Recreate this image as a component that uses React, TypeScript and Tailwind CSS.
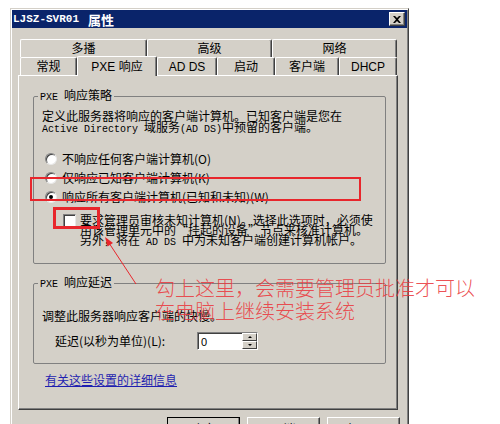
const mono = "font-['Liberation_Mono','Noto_Sans_CJK_SC',monospace] text-[10px]";

function Tab({ w, label, selected }: { w: string; label: string; selected?: boolean }) {
  return (
    <div
      className={`${w} ${
        selected ? "relative z-10 h-[20px] -mb-[1px] bg-[#d4d0c8]" : "h-full"
      } flex items-center justify-center border-t border-l border-white border-r border-r-[#404040] shadow-[inset_-1px_0_0_#808080] rounded-t-[2px] font-['Liberation_Sans','Noto_Sans_CJK_SC',sans-serif] text-[12px] leading-none`}
    >
      {label}
    </div>
  );
}

function Radio({ label, checked }: { label: string; checked?: boolean }) {
  return (
    <div className="h-[19px] flex items-center whitespace-nowrap">
      <div className="ml-[3px] w-[12px] h-[12px] rounded-full bg-white border border-t-[#808080] border-l-[#808080] border-r-[#e8e8e8] border-b-[#e8e8e8] shadow-[inset_1px_1px_0_#404040] flex items-center justify-center">
        {checked && <div className="w-[4px] h-[4px] rounded-full bg-black" />}
      </div>
      <span className="ml-[5px] leading-[14px]">{label}</span>
    </div>
  );
}

function Button({ label, def }: { label: string; def?: boolean }) {
  return (
    <div
      className={`w-[73px] h-[23px] flex items-center justify-center bg-[#d4d0c8] border ${
        def ? "border-black" : "border-t-white border-l-white border-r-[#404040] border-b-[#404040]"
      } shadow-[inset_-1px_-1px_0_#808080]`}
    >
      {label}
    </div>
  );
}

export default function App() {
  return (
    <div className="relative w-[500px] h-[424px] overflow-hidden bg-white pt-[8px] pl-[10px] font-['Noto_Sans_CJK_SC',sans-serif] text-[12px] text-black">
      <div className="w-[399px] h-[440px] bg-[#d4d0c8] border border-t-[#d4d0c8] border-l-[#d4d0c8] border-r-[#404040] border-b-[#404040] p-[1px] shadow-[inset_1px_1px_0_#fff,inset_-1px_-1px_0_#808080]">
        {/* title bar */}
        <div className="h-[18px] bg-[#0a246a] flex items-center justify-between pl-[1px] pr-[2px]">
          <div className="flex items-center text-white font-bold">
            <span className="font-['Liberation_Mono',monospace] text-[11px] leading-none">LJSZ-SVR01</span>
            <span className="ml-[9px] text-[13px] leading-none">属性</span>
          </div>
          <div className="w-[16px] h-[14px] bg-[#d4d0c8] border border-t-white border-l-white border-r-[#404040] border-b-[#404040] shadow-[inset_-1px_-1px_0_#808080] flex items-center justify-center">
            <svg width="8" height="7" viewBox="0 0 8 7">
              <path d="M0 0h2l2 2 2-2h2L5 3.5 8 7H6L4 5 2 7H0l3-3.5z" fill="#000" />
            </svg>
          </div>
        </div>

        <div className="ml-[6px] mt-[11px] w-[380px]">
          {/* tabs */}
          <div className="flex h-[18px] pl-[2px]">
            <Tab w="w-[127px]" label="多播" />
            <Tab w="w-[125px]" label="高级" />
            <Tab w="w-[125px]" label="网络" />
          </div>
          <div className="flex items-end h-[18px] pl-[2px]">
            <Tab w="w-[57px]" label="常规" />
            <Tab w="w-[80px]" label="PXE 响应" selected />
            <Tab w="w-[60px]" label="AD DS" />
            <Tab w="w-[58px]" label="启动" />
            <Tab w="w-[64px]" label="客户端" />
            <Tab w="w-[58px]" label="DHCP" />
          </div>

          {/* panel */}
          <div className="h-[335px] border border-t-white border-l-white border-r-[#404040] border-b-[#404040] shadow-[inset_-1px_-1px_0_#808080] pt-[12px] pl-[14px] pr-[11px]">
            <fieldset className="h-[176px] border border-[#808080] rounded-[2px] px-[8px]">
              <legend className="-ml-[4px] px-[2px] leading-[14px] whitespace-nowrap">
                <span className={mono}>PXE </span>响应策略
              </legend>
              <div className="pt-[5px] leading-[11px] whitespace-nowrap">
                <div>定义此服务器将响应的客户端计算机。已知客户端是您在</div>
                <div>
                  <span className={mono}>Active Directory </span>域服务<span className={mono}>(AD DS)</span>中预留的客户端。
                </div>
              </div>
              <div className="mt-[14px]">
                <Radio label="不响应任何客户端计算机(O)" />
                <Radio label="仅响应已知客户端计算机(K)" />
                <Radio label="响应所有客户端计算机(已知和未知)(W)" checked />
              </div>
              <div className="mt-[8px] flex pl-[21px]">
                <div className="shrink-0 w-[13px] h-[13px] bg-white border border-t-[#808080] border-l-[#808080] border-r-[#e8e8e8] border-b-[#e8e8e8] shadow-[inset_1px_1px_0_#404040]" />
                <div className="ml-[4px] mt-[1px] leading-[10px] whitespace-nowrap">
                  <div>要求管理员审核未知计算机(N)。选择此选项时，必须使</div>
                  <div>用该管理单元中的“挂起的设备”节点来核准计算机。</div>
                  <div>
                    另外，将在<span className={mono}> AD DS </span>中为未知客户端创建计算机帐户。
                  </div>
                </div>
              </div>
            </fieldset>

            <fieldset className="mt-[11px] h-[89px] border border-[#808080] rounded-[2px] px-[8px]">
              <legend className="-ml-[4px] px-[2px] leading-[14px] whitespace-nowrap">
                <span className={mono}>PXE </span>响应延迟
              </legend>
              <div className="pt-[17px] leading-[14px]">调整此服务器响应客户端的快慢。</div>
              <div className="mt-[9px] flex items-center h-[18px]">
                <span className="ml-[13px] w-[142px] leading-[14px]">延迟(以秒为单位)(L):</span>
                <div className="w-[61px] h-[18px] flex bg-white border border-t-[#808080] border-l-[#808080] border-r-white border-b-white">
                  <span className="flex-1 pl-[2px] leading-[16px] font-['Liberation_Sans',sans-serif] text-[11px] border-t border-l border-[#404040]">0</span>
                  <div className="w-[15px] flex flex-col">
                    <div className="h-[8px] bg-[#d4d0c8] border border-t-white border-l-white border-r-[#404040] border-b-[#404040] flex items-center justify-center">
                      <div className="w-0 h-0 border-l-[2px] border-r-[2px] border-b-[2px] border-l-transparent border-r-transparent border-b-black" />
                    </div>
                    <div className="h-[8px] bg-[#d4d0c8] border border-t-white border-l-white border-r-[#404040] border-b-[#404040] flex items-center justify-center">
                      <div className="w-0 h-0 border-l-[2px] border-r-[2px] border-t-[2px] border-l-transparent border-r-transparent border-t-black" />
                    </div>
                  </div>
                </div>
              </div>
            </fieldset>

            <div className="mt-[9px] ml-[12px] leading-[14px] text-[#1f1fb0] underline whitespace-nowrap">
              有关这些设置的详细信息
            </div>
          </div>
        </div>

        {/* buttons */}
        <div className="mt-[7px] ml-[155px] flex gap-[7px]">
          <Button label="确定" def />
          <Button label="取消" />
          <Button label="应用(A)" />
        </div>
      </div>

      {/* annotations */}
      <div className="absolute left-[30px] top-[177px] w-[331px] h-[24px] border-2 border-[#e8262c]" />
      <div className="absolute left-[53px] top-[207px] w-[47px] h-[22px] border-[3px] border-[#e8262c]" />
      <svg className="absolute left-0 top-0 pointer-events-none" width="500" height="424" viewBox="0 0 500 424">
        <line x1="136" y1="284" x2="109" y2="243" stroke="#e8262c" strokeWidth="1" />
        <polygon points="105,237 113,243 107.5,246.5" fill="#e8262c" />
      </svg>
      <div className="absolute left-[155px] top-[276px] text-[20px] leading-[23px] font-light text-[#ea3b40]/90 whitespace-nowrap">
        <div>勾上这里，会需要管理员批准才可以</div>
        <div>在电脑上继续安装系统</div>
      </div>
    </div>
  );
}
